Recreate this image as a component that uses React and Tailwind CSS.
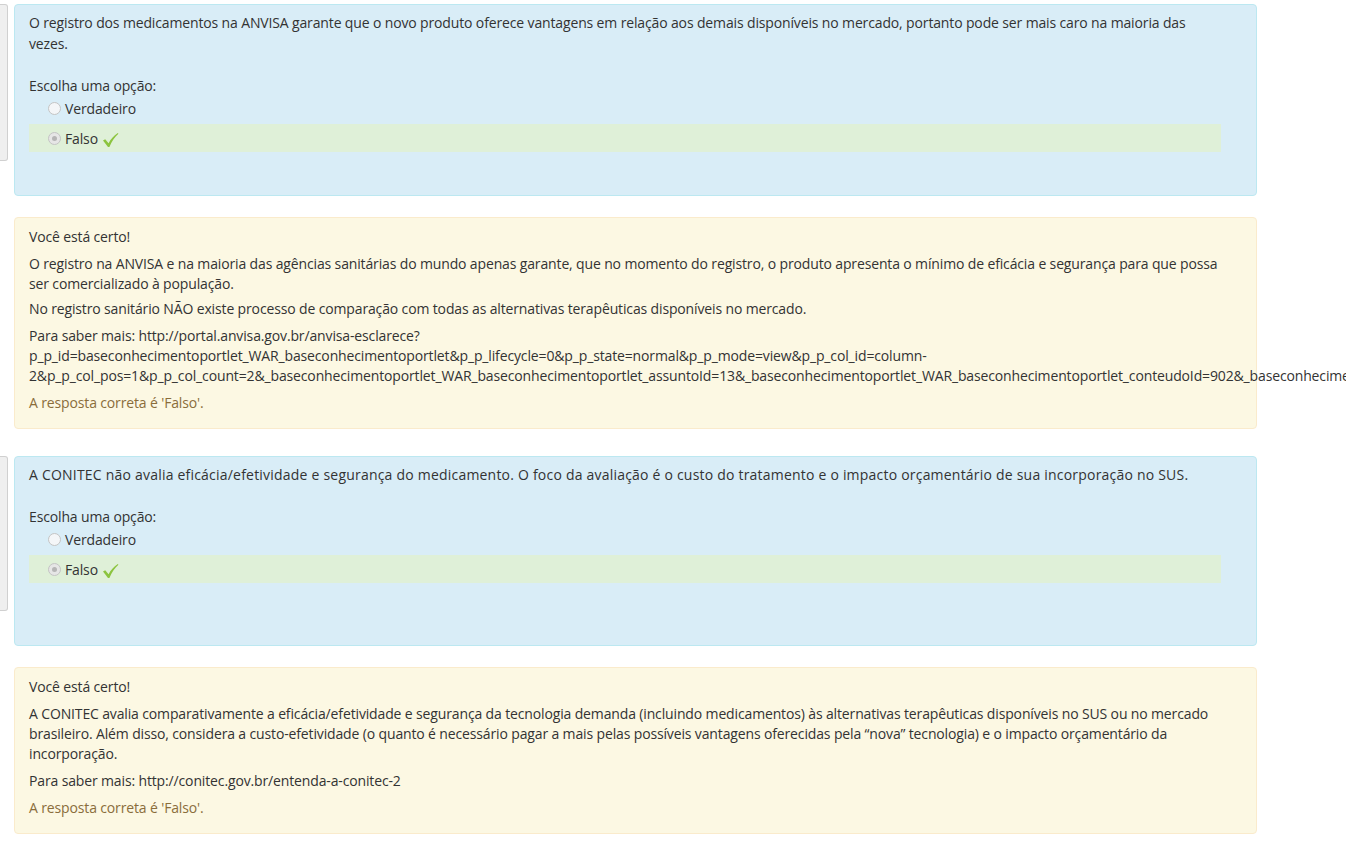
import React from "react";

const questions = [
  {
    id: 1,
    text: "O registro dos medicamentos na ANVISA garante que o novo produto oferece vantagens em relação aos demais disponíveis no mercado, portanto pode ser mais caro na maioria das vezes.",
    textClass: "",
    extraBottom: "pb-[43px]",
    infoHeight: "h-[157px]",
    feedback: [
      "O registro na ANVISA e na maioria das agências sanitárias do mundo apenas garante, que no momento do registro, o produto apresenta o mínimo de eficácia e segurança para que possa ser comercializado à população.",
      "No registro sanitário NÃO existe processo de comparação com todas as alternativas terapêuticas disponíveis no mercado.",
    ],
    more: [
      "Para saber mais: http://portal.anvisa.gov.br/anvisa-esclarece?",
      "p_p_id=baseconhecimentoportlet_WAR_baseconhecimentoportlet&p_p_lifecycle=0&p_p_state=normal&p_p_mode=view&p_p_col_id=column-",
      "2&p_p_col_pos=1&p_p_col_count=2&_baseconhecimentoportlet_WAR_baseconhecimentoportlet_assuntoId=13&_baseconhecimentoportlet_WAR_baseconhecimentoportlet_conteudoId=902&_baseconhecimentoportlet_WAR_baseconhecimentoportlet_mvcPath=%2Fhtml%2Fportlet%2Fview.jsp",
    ],
  },
  {
    id: 2,
    text: "A CONITEC não avalia eficácia/efetividade e segurança do medicamento. O foco da avaliação é o custo do tratamento e o impacto orçamentário de sua incorporação no SUS.",
    textClass: "tracking-[0.21px]",
    extraBottom: "pb-[62px]",
    infoHeight: "h-[155px]",
    feedback: [
      "A CONITEC avalia comparativamente a eficácia/efetividade e segurança da tecnologia demanda (incluindo medicamentos) às alternativas terapêuticas disponíveis no SUS ou no mercado brasileiro. Além disso, considera a custo-efetividade (o quanto é necessário pagar a mais pelas possíveis vantagens oferecidas pela “nova” tecnologia) e o impacto orçamentário da incorporação.",
    ],
    more: ["Para saber mais: http://conitec.gov.br/entenda-a-conitec-2"],
  },
];

function Radio({ checked }) {
  return (
    <span
      className={
        "inline-block w-[13px] h-[13px] rounded-full border border-[#c4c4c4] mr-[4px] relative " +
        (checked ? "bg-[#e6e6e6]" : "bg-[#f4f6f8]")
      }
    >
      {checked && (
        <span className="absolute left-[3px] top-[3px] w-[5px] h-[5px] rounded-full bg-[#b5b5b5]" />
      )}
    </span>
  );
}

function Tick() {
  return (
    <svg width="17" height="16" viewBox="0 0 17 16" className="ml-[4px] mt-[3px]">
      <path
        d="M1 8.5 L3.2 7.2 L6.6 11.2 C8.6 7.4 11.6 3.6 15.8 1 L16.4 1.8 C12.6 5.2 9.8 9.6 7.4 15 L6 15 Z"
        fill="#8cc43f"
      />
    </svg>
  );
}

function Question({ q }) {
  return (
    <div className="flex gap-[6px]">
      <div
        className={`w-[8px] ${q.infoHeight} shrink-0 bg-[#efefef] border border-l-0 border-[#d0d0d0] rounded-r-[3px]`}
      />
      <div className="w-[1243px] shrink-0">
        <div
          className={`bg-[#d9edf7] border border-[#bce8f1] rounded-[4px] pl-[14px] pr-[35px] pt-[7px] ${q.extraBottom}`}
        >
          <div className={`leading-[21px] ${q.textClass}`}>{q.text}</div>
          <div className="mt-[21px] leading-[21px]">Escolha uma opção:</div>
          <div className="flex items-center h-[25px] pl-[19px]">
            <Radio checked={false} />
            <span>Verdadeiro</span>
          </div>
          <div className="flex items-center h-[28px] pl-[19px] mt-[3px] bg-[#dff0d8]">
            <Radio checked />
            <span>Falso</span>
            <Tick />
          </div>
        </div>

        <div className="mt-[21px] bg-[#fcf8e3] border border-[#faebcc] rounded-[4px] pl-[14px] pr-[35px] pt-[9px] pb-[15px] leading-[20px]">
          <div>Você está certo!</div>
          <div className="mt-[7px] flex flex-col gap-[5px]">
            {q.feedback.map((p, i) => (
              <p key={i}>{p}</p>
            ))}
            <p className="mt-[2px]">
              {q.more.map((line, i) => (
                <span key={i} className="block whitespace-nowrap">
                  {line}
                </span>
              ))}
            </p>
          </div>
          <div className="mt-[7px] text-[#8a6d3b]">A resposta correta é 'Falso'.</div>
        </div>
      </div>
    </div>
  );
}

export default function App() {
  return (
    <div
      className="w-full overflow-hidden bg-white text-[14px] tracking-[-0.14px] text-[#333333] pt-[4px] pb-[20px]"
      style={{ fontFamily: '"Open Sans", "Noto Sans", sans-serif' }}
    >
      <div className="flex flex-col gap-[27px]">
        {questions.map((q) => (
          <Question key={q.id} q={q} />
        ))}
      </div>
    </div>
  );
}
